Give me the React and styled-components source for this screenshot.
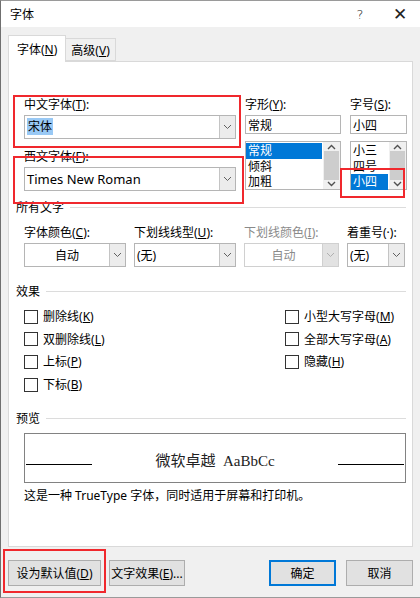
import styled, { createGlobalStyle } from 'styled-components'

const Global = createGlobalStyle`
    body {
        margin: 0;
        font-family: "Noto Sans", "Noto Sans CJK SC", sans-serif;
        font-size: 12px;
        color: #000;
    }
    * { box-sizing: border-box; }
`

const Window = styled.div`
    position: relative;
    width: 420px;
    height: 598px;
    background: #f0f0f0;
    border-left: 1px solid #6f6f6f;
    border-top: 1px solid #9a9a9a;
    border-bottom: 1px solid #9a9a9a;
    display: flex;
    flex-direction: column;
    overflow: hidden;
`

const TitleBar = styled.div`
    height: 27px;
    background: #fff;
    display: flex;
    align-items: center;
    padding-left: 9px;
    font-size: 12px;
`

const TitleText = styled.span`
    flex: 1;
`

const TitleButton = styled.span`
    width: 40px;
    text-align: center;
    font-size: ${p => p.$size || 14}px;
    color: #222;
    font-family: "DejaVu Sans", sans-serif;
    font-weight: 300;
`

const Body = styled.div`
    flex: 1;
    display: flex;
    flex-direction: column;
    padding: 8px 7px 0 7px;
`

const TabRow = styled.div`
    display: flex;
    align-items: flex-end;
    height: 26px;
    position: relative;
    z-index: 1;
`

const Tab = styled.div`
    height: ${p => (p.$active ? 27 : 23)}px;
    padding: 0 ${p => (p.$active ? 8 : 5)}px;
    display: flex;
    align-items: center;
    background: ${p => (p.$active ? '#fff' : '#f0f0f0')};
    border: 1px solid #d9d9d9;
    border-bottom: ${p => (p.$active ? 'none' : '1px solid #d9d9d9')};
    margin-left: ${p => (p.$active ? 0 : -1)}px;
    margin-bottom: ${p => (p.$active ? -1 : 0)}px;
`

const Key = styled.span`
    text-decoration: underline;
`

const Panel = styled.div`
    width: 405px;
    height: 486px;
    background: #fff;
    border: 1px solid #d9d9d9;
    padding: 33px 0 0 7px;
    display: flex;
    flex-direction: column;
`

const FontRow = styled.div`
    display: grid;
    grid-template-columns: 212px 96px 57px;
    column-gap: 9px;
    margin-left: 8px;
`

const Column = styled.div`
    display: flex;
    flex-direction: column;
`

const Label = styled.div`
    height: 20px;
    line-height: 20px;
    color: ${p => (p.$disabled ? '#8a8a8a' : '#000')};
    white-space: nowrap;
    margin-top: ${p => p.$top || 0}px;
`

const Combo = styled.div`
    height: ${p => p.$h || 24}px;
    border: 1px solid ${p => (p.$disabled ? '#d0d0d0' : '#b5b5b5')};
    background: #fff;
    display: flex;
    align-items: stretch;
`

const ComboText = styled.div`
    flex: 1;
    display: flex;
    align-items: center;
    justify-content: ${p => (p.$center ? 'center' : 'flex-start')};
    padding-left: ${p => (p.$center ? 0 : 2)}px;
    font-size: ${p => p.$size || 12}px;
    color: ${p => (p.$disabled ? '#8a8a8a' : '#000')};
    white-space: nowrap;
    overflow: hidden;
`

const Selected = styled.span`
    background: #99c9f5;
    padding: 0 1px;
    line-height: 18px;
`

const DropButton = styled.div`
    width: 16px;
    border-left: 1px solid ${p => (p.$disabled ? '#d0d0d0' : '#c4c4c4')};
    background: ${p => (p.$disabled ? '#e2e2e2' : '#ececec')};
    display: flex;
    align-items: center;
    justify-content: center;
`

const TextBox = styled.div`
    height: 19px;
    border: 1px solid #b5b5b5;
    display: flex;
    align-items: center;
    padding-left: 2px;
    font-size: 12px;
`

const ListBox = styled.div`
    margin-top: 7px;
    height: 49px;
    border: 1px solid #b5b5b5;
    display: flex;
`

const ListItems = styled.div`
    flex: 1;
    padding-top: 1px;
`

const ListItem = styled.div`
    height: 15.5px;
    line-height: 15px;
    padding-left: 2px;
    margin-right: 1px;
    background: ${p => (p.$selected ? '#0078d7' : 'transparent')};
    color: ${p => (p.$selected ? '#fff' : '#000')};
`

const ScrollBar = styled.div`
    width: 17px;
    background: #f0f0f0;
    display: flex;
    flex-direction: column;
    justify-content: space-between;
    align-items: center;
    padding: 2px 0;
`

const Thumb = styled.div`
    width: 15px;
    flex: 1;
    margin: 1px 0;
    background: #cdcdcd;
`

const SectionTitle = styled.div`
    display: flex;
    align-items: center;
    gap: 6px;
    height: 20px;
    margin-top: ${p => p.$top}px;
    margin-right: 6px;
    white-space: nowrap;

    &::after {
        content: '';
        flex: 1;
        height: 1px;
        background: #dcdcdc;
    }
`

const AllTextRow = styled.div`
    display: grid;
    grid-template-columns: 102px 102px 95px 58px;
    column-gap: 8px;
    margin-left: 8px;
    margin-top: 6px;
`

const Effects = styled.div`
    display: grid;
    grid-template-columns: 261px 120px;
    margin-left: 8px;
    margin-top: 9px;
`

const CheckColumn = styled.div`
    display: flex;
    flex-direction: column;
    gap: 9.7px;
`

const Check = styled.label`
    display: flex;
    align-items: center;
    gap: 5px;
    height: 13px;
    line-height: 13px;
    white-space: nowrap;

    &::before {
        content: '';
        width: 12px;
        height: 12px;
        border: 1px solid #333;
        background: #fff;
    }
`

const Preview = styled.div`
    margin: 5px 0 0 8px;
    width: 382px;
    height: 50px;
    border: 1px solid #828282;
    display: flex;
    align-items: center;
    padding: 4px 1px 0;
`

const Rule = styled.div`
    width: 66px;
    height: 1px;
    background: #000;
    margin-top: 9px;
`

const Sample = styled.div`
    flex: 1;
    text-align: center;
    font-family: "Liberation Serif", "Noto Sans CJK SC", serif;
    font-size: 15px;
    color: #222;
    margin-bottom: 2px;
`

const Note = styled.div`
    margin: 4px 0 0 8px;
    height: 18px;
    line-height: 18px;
`

const ButtonRow = styled.div`
    display: flex;
    align-items: center;
    height: 50px;
    padding-top: 2px;
`

const Button = styled.div`
    width: ${p => p.$w}px;
    height: 26px;
    margin-left: ${p => p.$gap || 0}px;
    background: #e1e1e1;
    border: 1px solid ${p => (p.$primary ? '#0078d7' : '#adadad')};
    box-shadow: ${p => (p.$primary ? 'inset 0 0 0 1px #0078d7' : 'none')};
    display: flex;
    align-items: center;
    justify-content: center;
    white-space: nowrap;
`

const Spacer = styled.div`
    flex: 1;
`

const RedMark = styled.div`
    position: absolute;
    left: ${p => p.$x}px;
    top: ${p => p.$y}px;
    width: ${p => p.$w}px;
    height: ${p => p.$h}px;
    border: 2px solid #f0282d;
    pointer-events: none;
`

const Chevron = ({ light }) => (
    <svg width="9" height="6" viewBox="0 0 9 6">
        <path d="M1 1 L4.5 4.5 L8 1" fill="none" stroke={light ? '#b0b0b0' : '#606060'} strokeWidth="1" />
    </svg>
)

const ArrowUp = () => (
    <svg width="9" height="6" viewBox="0 0 9 6">
        <path d="M1 5 L4.5 1.5 L8 5" fill="none" stroke="#505050" strokeWidth="1.4" />
    </svg>
)

const ArrowDown = () => (
    <svg width="9" height="6" viewBox="0 0 9 6">
        <path d="M1 1 L4.5 4.5 L8 1" fill="none" stroke="#505050" strokeWidth="1.4" />
    </svg>
)

const ComboBox = ({ children, center, disabled, size, h }) => (
    <Combo $disabled={disabled} $h={h}>
        <ComboText $center={center} $disabled={disabled} $size={size}><span>{children}</span></ComboText>
        <DropButton $disabled={disabled}><Chevron light={disabled} /></DropButton>
    </Combo>
)

const List = ({ items, selected }) => (
    <ListBox>
        <ListItems>
            {items.map(item => (
                <ListItem key={item} $selected={item === selected}>{item}</ListItem>
            ))}
        </ListItems>
        <ScrollBar>
            <ArrowUp />
            <Thumb />
            <ArrowDown />
        </ScrollBar>
    </ListBox>
)

const CheckItem = ({ text, k }) => (
    <Check><span>{text}(<Key>{k}</Key>)</span></Check>
)

const App = () => {
    return (
        <Window>
            <Global />
            <TitleBar>
                <TitleText>字体</TitleText>
                <TitleButton $size={13}>?</TitleButton>
                <TitleButton $size={17}>✕</TitleButton>
            </TitleBar>
            <Body>
                <TabRow>
                    <Tab $active><span>字体(<Key>N</Key>)</span></Tab>
                    <Tab><span>高级(<Key>V</Key>)</span></Tab>
                </TabRow>
                <Panel>
                    <FontRow>
                        <Column>
                            <Label>中文字体(<Key>T</Key>):</Label>
                            <ComboBox h={24}><Selected>宋体</Selected></ComboBox>
                            <Label $top={8}>西文字体(<Key>F</Key>):</Label>
                            <ComboBox size={13}>Times New Roman</ComboBox>
                        </Column>
                        <Column>
                            <Label>字形(<Key>Y</Key>):</Label>
                            <TextBox>常规</TextBox>
                            <List items={['常规', '倾斜', '加粗']} selected="常规" />
                        </Column>
                        <Column>
                            <Label>字号(<Key>S</Key>):</Label>
                            <TextBox>小四</TextBox>
                            <List items={['小三', '四号', '小四']} selected="小四" />
                        </Column>
                    </FontRow>

                    <SectionTitle $top={6}>所有文字</SectionTitle>
                    <AllTextRow>
                        <Column>
                            <Label>字体颜色(<Key>C</Key>):</Label>
                            <ComboBox center>自动</ComboBox>
                        </Column>
                        <Column>
                            <Label>下划线线型(<Key>U</Key>):</Label>
                            <ComboBox>(无)</ComboBox>
                        </Column>
                        <Column>
                            <Label $disabled>下划线颜色(<Key>I</Key>):</Label>
                            <ComboBox center disabled>自动</ComboBox>
                        </Column>
                        <Column>
                            <Label>着重号(·):</Label>
                            <ComboBox>(无)</ComboBox>
                        </Column>
                    </AllTextRow>

                    <SectionTitle $top={14}>效果</SectionTitle>
                    <Effects>
                        <CheckColumn>
                            <CheckItem text="删除线" k="K" />
                            <CheckItem text="双删除线" k="L" />
                            <CheckItem text="上标" k="P" />
                            <CheckItem text="下标" k="B" />
                        </CheckColumn>
                        <CheckColumn>
                            <CheckItem text="小型大写字母" k="M" />
                            <CheckItem text="全部大写字母" k="A" />
                            <CheckItem text="隐藏" k="H" />
                        </CheckColumn>
                    </Effects>

                    <SectionTitle $top={17}>预览</SectionTitle>
                    <Preview>
                        <Rule />
                        <Sample>微软卓越&nbsp; AaBbCc</Sample>
                        <Rule />
                    </Preview>
                    <Note>这是一种 TrueType 字体，同时适用于屏幕和打印机。</Note>
                </Panel>
                <ButtonRow>
                    <Button $w={93}><span>设为默认值(<Key>D</Key>)</span></Button>
                    <Button $w={76} $gap={8}><span>文字效果(<Key>E</Key>)...</span></Button>
                    <Spacer />
                    <Button $w={67} $primary>确定</Button>
                    <Button $w={67} $gap={10}>取消</Button>
                </ButtonRow>
            </Body>
            <RedMark $x={12} $y={94} $w={228} $h={53} />
            <RedMark $x={12} $y={155} $w={231} $h={48} />
            <RedMark $x={339} $y={167} $w={65} $h={30} />
            <RedMark $x={2} $y={548} $w={103} $h={44} />
        </Window>
    )
}

export default App
